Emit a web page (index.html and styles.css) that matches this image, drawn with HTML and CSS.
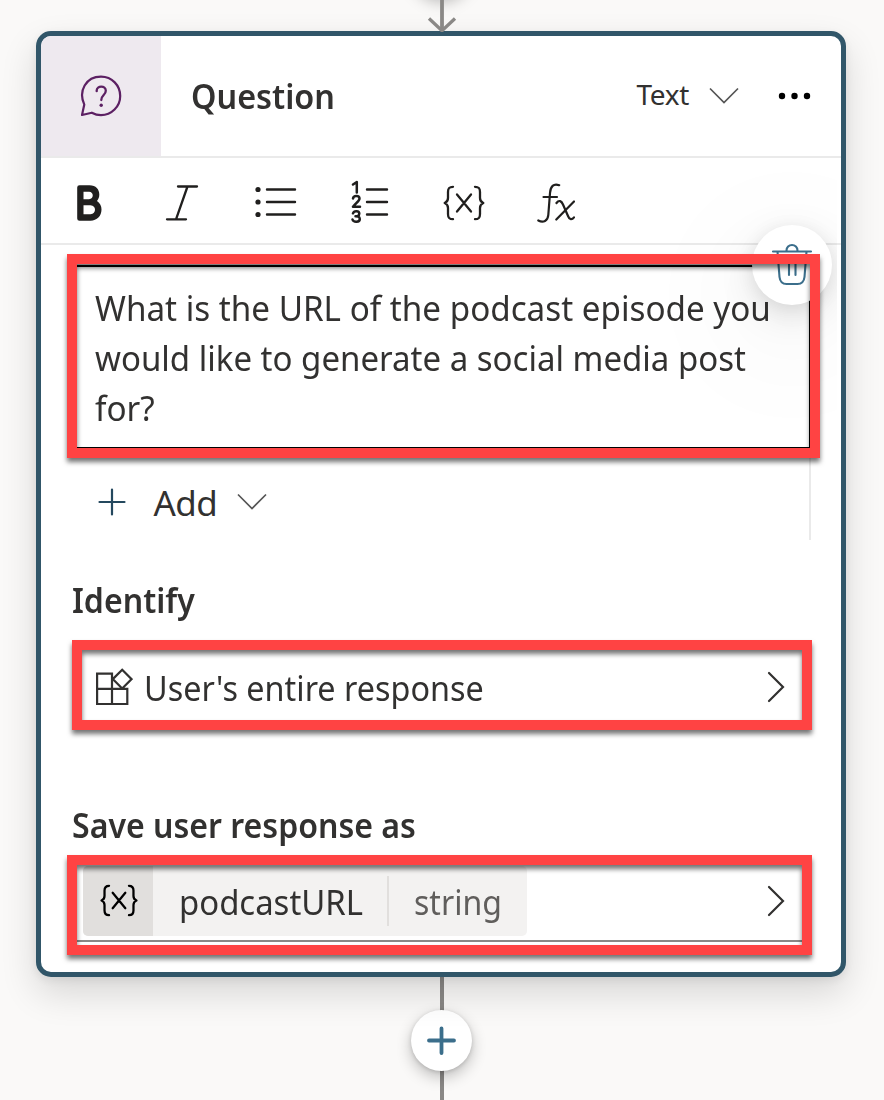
FILE: index.html
```html
<!DOCTYPE html>
<html lang="en">
<head>
<meta charset="utf-8">
<title>Question node</title>
<link rel="stylesheet" href="styles.css">
</head>
<body>
<main class="canvas">
  <div class="connector-in">
    <span class="previous-node"></span>
    <svg class="arrow" width="30" height="32" viewBox="0 0 30 32" fill="none" stroke="#8a8886"><path d="M15 0V30" stroke-width="3.8"/><path d="M2 18.5 15 30.7 28 18.5" stroke-width="3.3"/></svg>
  </div>

  <section class="card">
    <header class="card-header">
      <div class="node-icon">
        <svg width="42" height="42" viewBox="0 0 42 42" fill="none" stroke="#5c2063" stroke-width="2.2" stroke-linejoin="round" stroke-linecap="round"><path d="M2 40 4.300 29.600C-2 16 6 1.700 21 1.700c11 0 19.200 8.700 19.200 19.300S31.500 40.200 21 40.200c-3.600 0-6.500-1-9.200-2.500Z"/><path d="M16.700 16.200v-.700c0-5.200 9.100-5.200 9.100.300 0 4.300-4.500 4.300-4.500 9.200" stroke-width="2.300"/><circle cx="21.200" cy="30.200" r="1.700" fill="#5c2063" stroke="none"/></svg>
      </div>
      <h1 class="title">Question</h1>
      <div class="type-picker"><span class="type-label">Text</span>
        <svg width="30" height="18" viewBox="0 0 30 18" fill="none" stroke="#555" stroke-width="1.7"><path d="M1 1.500 15 15.500 29 1.500"/></svg>
      </div>
      <svg class="more" width="34" height="8" viewBox="0 0 34 8"><circle cx="4" cy="4" r="3.200"/><circle cx="16.500" cy="4" r="3.200"/><circle cx="29" cy="4" r="3.200"/></svg>
    </header>

    <div class="toolbar">
      <svg class="tool-bold" width="26" height="36" viewBox="0 0 26 36" fill="#201f1e" fill-rule="evenodd"><path d="M2.500.300H12.500C19 .300 22.300 4.500 22.300 9.500c0 2.700-.800 4.800-2.300 6.400 3 1.900 4.500 5 4.500 8.600 0 6.500-4.500 11.200-11 11.200H2.500Q.200 35.700.200 33.500V2.500Q.200.300 2.500.300ZM6.500 6.800V14.200H12c5 0 5-7.400 0-7.400ZM6.500 20.300V29.200h7c6 0 6-8.900 0-8.900Z"/></svg>
      <svg class="tool-italic" width="34" height="36" viewBox="0 0 34 36" fill="none" stroke="#201f1e" stroke-width="2.300" stroke-linecap="round"><path d="M13 1.500H32M2 34.300H21M22.500 1.500 11 34.300"/></svg>
      <svg class="tool-bullets" width="42" height="32" viewBox="0 0 42 32"><g fill="#201f1e"><circle cx="3" cy="3.500" r="2.600"/><circle cx="3" cy="16" r="2.600"/><circle cx="3" cy="28.500" r="2.600"/></g><path d="M12 3.500H40M12 16H40M12 28.500H40" stroke="#201f1e" stroke-width="2.400" stroke-linecap="round"/></svg>
      <svg class="tool-numbers" width="38" height="44" viewBox="0 0 38 44" fill="none" stroke="#201f1e" stroke-linecap="round" stroke-linejoin="round"><path d="M16 9.500H36M16 22H36M16 34.500H36" stroke-width="2.400"/><path d="M2 4.500 5.800 2V12.500M2 18.500c.500-3.500 6.500-3.300 6.500 0 0 2.500-3.500 4.500-6.500 8.300h7M2 33.300c1-3 6.300-2.700 6.300.300 0 2.800-2.600 2.700-3.800 2.700 1.400 0 4.300.100 4.300 2.700 0 3.500-6.300 3.700-7.300.500" stroke-width="2.500"/></svg>
      <svg class="tool-variable" width="42" height="36" viewBox="0 0 42 36" fill="none" stroke="#201f1e" stroke-width="2.300" stroke-linecap="round" stroke-linejoin="round"><path d="M10 1.800C6 1.800 5 3.500 5 7v6c0 3-1 4-3.300 5C4 19 5 20 5 23v6c0 3.500 1 5.200 5 5.200M32 1.800c4 0 5 1.700 5 5.200v6c0 3 1 4 3.300 5C38 19 37 20 37 23v6c0 3.500-1 5.200-5 5.200M14 9.500 28 26.500M28 9.500 14 26.500"/></svg>
      <svg class="tool-formula" width="38" height="40" viewBox="0 0 38 40" fill="none" stroke="#201f1e" stroke-width="2.200" stroke-linecap="round" stroke-linejoin="round"><path d="M1.300 37.500c5 2.500 9.500.500 10-5.500L13 10c.400-6.500 3.500-10 9.200-7.800M6.500 14H20M19.500 20c2.500-3.500 5-2 6.500 1.500l5 11.500c1.500 4 4 4 6 1.300M37 18.500 19.300 36.500"/></svg>
    </div>

    <div class="body">
      <div class="editor"><div class="message">What is the URL of the podcast episode you<br><span class="line-two">would like to generate a social media post</span><br>for?</div></div>
      <div class="add-row">
        <svg width="28" height="28" viewBox="0 0 28 28" stroke="#24485e" stroke-width="2.200" stroke-linecap="round"><path d="M14 1.500V26.500M1.500 14H26.500"/></svg>
        <span class="add-label">Add</span>
        <svg class="add-chevron" width="30" height="18" viewBox="0 0 30 18" fill="none" stroke="#555" stroke-width="1.700"><path d="M1 1.500 15 15.500 29 1.500"/></svg>
      </div>

      <h2 class="label identify-label">Identify</h2>
      <div class="select-row">
        <svg width="38" height="38" viewBox="0 0 38 38" fill="none" stroke="#323130" stroke-width="2.200"><path d="M17 5.600H2.100V36H32.300V20.800H17ZM2.100 20.800H17V36M17 5.600V20.800M27.200 1.700 36.600 11.100 27.200 20.500 17.800 11.100Z"/></svg>
        <span class="entity">User's entire response</span>
        <svg class="chevron" width="18" height="32" viewBox="0 0 18 32" fill="none" stroke="#323130" stroke-width="2.200" stroke-linecap="round"><path d="M2 2 16 16 2 30"/></svg>
      </div>

      <h2 class="label save-label">Save user response as</h2>
      <div class="variable-row">
        <div class="chip">
          <span class="chip-icon"><svg width="38" height="33" viewBox="0 0 42 36" fill="none" stroke="#000" stroke-width="2.500" stroke-linecap="round" stroke-linejoin="round"><path d="M10 1.800C6 1.800 5 3.500 5 7v6c0 3-1 4-3.300 5C4 19 5 20 5 23v6c0 3.500 1 5.200 5 5.200M32 1.800c4 0 5 1.700 5 5.200v6c0 3 1 4 3.300 5C38 19 37 20 37 23v6c0 3.500-1 5.200-5 5.200M14 9.500 28 26.500M28 9.500 14 26.500"/></svg></span>
          <span class="variable-cell"><span class="variable-name">podcastURL</span></span>
          <span class="variable-type">string</span>
        </div>
        <svg class="chevron" width="18" height="32" viewBox="0 0 18 32" fill="none" stroke="#323130" stroke-width="2.200" stroke-linecap="round"><path d="M2 2 16 16 2 30"/></svg>
      </div>
    </div>
    <button class="delete" aria-label="Delete">
      <svg width="42" height="44" viewBox="0 0 42 44" fill="none" stroke="#3b6e8b" stroke-width="2.100" stroke-linecap="round" stroke-linejoin="round"><path d="M2 8.500H40M15.500 8.500V7.500a5.500 5.500 0 0 1 11 0v1M6.500 8.500 8.500 34c.500 4.500 3 7 7 7h11c4 0 6.500-2.500 7-7L35.500 8.500M18 16V32M24.500 16V32"/></svg>
    </button>
  </section>

  <div class="connector-out">
    <button class="add-node" aria-label="Add node">
      <svg width="30" height="30" viewBox="0 0 30 30" stroke="#3b6e8b" stroke-width="3.800" stroke-linecap="round"><path d="M14.500 2.500V27M2 14.500H27"/></svg>
    </button>
  </div>

  <div class="callout callout-question"></div>
  <div class="callout callout-identify"></div>
  <div class="callout callout-variable"></div>
</main>
</body>
</html>
```
FILE: styles.css
```css
* { box-sizing: border-box; }
body { margin: 0; }
svg { display: block; flex: none; }
button { padding: 0; border: 0; }

.canvas {
  position: relative;
  width: 884px;
  height: 1100px;
  overflow: hidden;
  background: #faf9f8;
  color: #323130;
  font-family: "Noto Sans", "Open Sans", sans-serif;
  font-size: 35px;
}

.connector-in { position: relative; width: 883px; height: 31px; display: flex; justify-content: center; }
.previous-node {
  position: absolute;
  left: 411px;
  top: -63px;
  width: 61px;
  height: 61px;
  border-radius: 50%;
  box-shadow: 0 4px 15px rgba(0,0,0,.26);
}
.arrow { position: relative; z-index: 1; }

.card {
  position: relative;
  width: 810px;
  height: 946px;
  margin-left: 36.400px;
  border: 5px solid #315669;
  border-radius: 15px;
  background: #fff;
  box-shadow: 0 16px 36px rgba(0,0,0,.14), 0 3px 9px rgba(0,0,0,.07);
}

.card-header { display: flex; align-items: center; height: 122px; border-bottom: 2px solid #eaeaea; }
.node-icon {
  display: flex;
  align-items: center;
  justify-content: center;
  width: 120px;
  height: 120px;
  border-top-left-radius: 10px;
  background: #eee9ef;
}
/* Horizontal condensing for the humanist UI text. */
.title, .message, .line-two, .label, .entity, .variable-name, .variable-type { transform-origin: 0 50%; white-space: nowrap; }
.title { margin: 0 0 0 30px; width: 200px; font-size: 35px; line-height: 50px; font-weight: 600; transform: scaleX(.925); }
.type-picker { display: flex; align-items: center; gap: 20px; margin-left: 245px; }
.type-label { width: 53px; padding-bottom: 4px; font-size: 28px; line-height: 40px; letter-spacing: -.300px; }
.more { margin-left: 39px; }

.toolbar { display: flex; align-items: center; height: 87px; padding-left: 36px; border-bottom: 2px solid #eaeaea; }
.tool-bold { margin-top: 5px; }
.tool-italic { margin: 5px 0 0 62px; }
.tool-bullets { margin: 2px 0 0 56px; }
.tool-numbers { margin: 2px 0 0 53.500px; }
.tool-variable { margin: 5px 0 0 54px; }
.tool-formula { margin: 5px 0 0 52.500px; }

.body { padding: 20px 30px 0; }
.editor {
  height: 183px;
  padding: 16px 0 0 22px;
  border: solid #000;
  border-width: 2px 2px 1px;
  line-height: 50px;
}
.message { transform: scaleX(.949); }
.line-two { display: inline-block; transform: scaleX(.994); }
.add-row { display: flex; align-items: center; height: 92px; padding: 16px 0 0 27px; border-right: 2px solid #eaeaea; }
.add-label { margin-left: 27px; width: 64px; padding-top: 1px; letter-spacing: -.500px; }
.add-chevron { margin-left: 20px; }

.label { margin: 0 0 0 1px; font-size: 34px; line-height: 50px; font-weight: 600; transform: scaleX(.943); }
.identify-label { margin-top: 35px; }
.select-row { display: flex; align-items: center; height: 80px; margin-top: 22px; padding: 0 26px 0 24px; }
.entity { margin-left: 11px; padding-top: 1px; transform: scaleX(.925); }
.chevron { margin-left: auto; }
.save-label { margin-top: 73px; }
.variable-row { display: flex; align-items: center; height: 76px; margin-top: 16px; padding: 1px 26px 6px 12px; border-bottom: 2px solid #8a8886; }
.chip { display: flex; align-items: center; width: 444px; height: 70px; border-radius: 5px; background: #f3f2f1; }
.chip-icon { display: flex; align-items: center; justify-content: center; width: 70px; height: 70px; padding-left: 1px; border-radius: 5px 0 0 5px; background: #e1dfdd; }
.variable-cell { margin-left: 26px; width: 210px; height: 50px; border-right: 2px solid #e1dfdd; }
.variable-name { display: block; padding-top: 1px; line-height: 50px; transform: scaleX(.94); }
.variable-type { margin-left: 25px; padding-top: 2px; color: #605e5c; transform: scaleX(.915); }

.delete {
  position: absolute;
  right: 9.500px;
  top: 189px;
  display: flex;
  align-items: center;
  justify-content: center;
  width: 80px;
  height: 80px;
  border-radius: 50%;
  background: #fff;
  box-shadow: 0 30px 110px 45px rgba(0,0,0,.025), 0 12px 36px rgba(0,0,0,.1), 0 3px 18px rgba(0,0,0,.08);
  clip-path: inset(-67px -5px -300px -300px);
}

.connector-out {
  display: flex;
  align-items: center;
  justify-content: center;
  width: 883px;
  height: 123px;
  background: linear-gradient(#8a8886, #8a8886) 439.500px 0 / 4px 100% no-repeat;
}
.add-node {
  display: flex;
  align-items: center;
  justify-content: center;
  width: 61px;
  height: 61px;
  margin-top: 4px;
  border-radius: 50%;
  background: #fff;
  box-shadow: 0 6px 15px rgba(0,0,0,.24), 0 1px 4px rgba(0,0,0,.15);
}

.callout { position: absolute; border: 10px solid #ff4343; filter: drop-shadow(0 4px 2.500px rgba(0,0,0,.55)); }
.callout-question { left: 67px; top: 254px; width: 753px; height: 204px; }
.callout-identify { left: 72px; top: 640px; width: 740px; height: 90px; }
.callout-variable { left: 67px; top: 855px; width: 745px; height: 100px; }
```
